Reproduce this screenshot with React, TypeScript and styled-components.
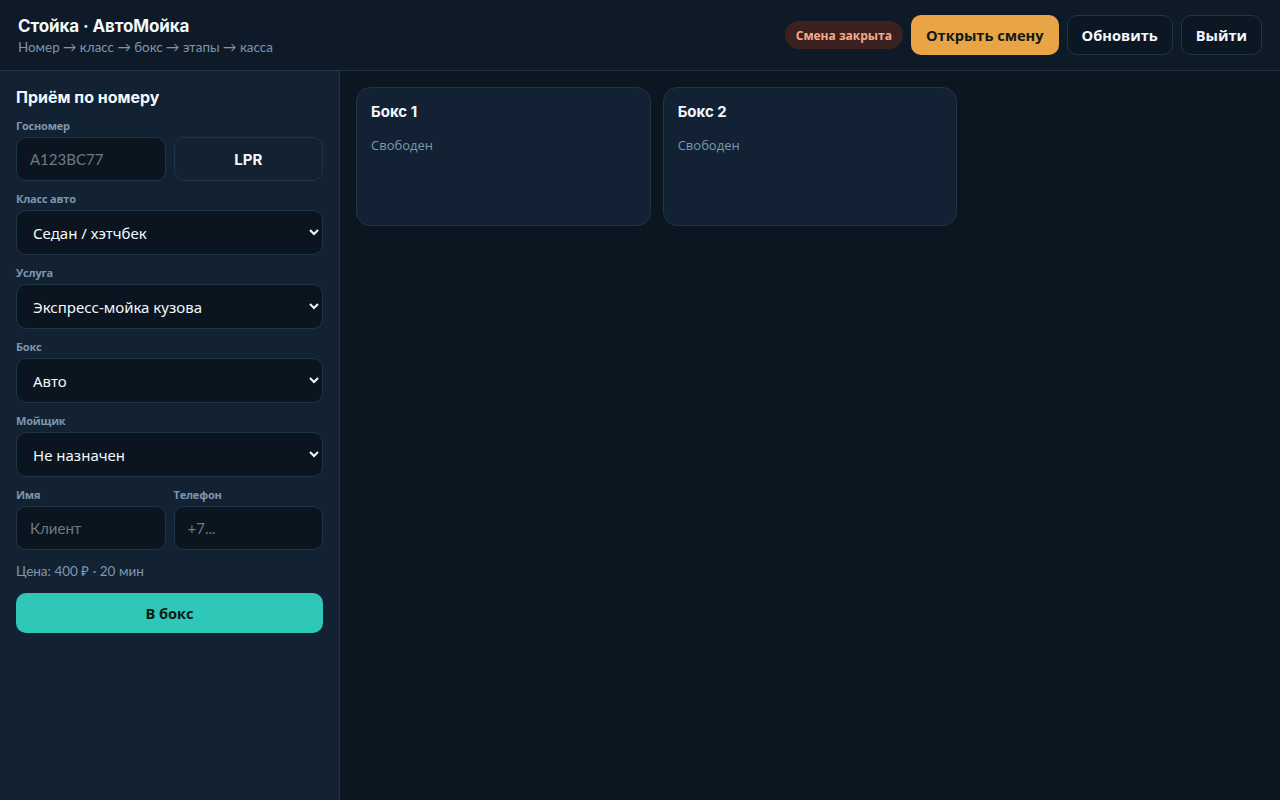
import React from 'react'
import styled, { createGlobalStyle } from 'styled-components'

const GlobalStyle = createGlobalStyle`
  html, body {
    margin: 0;
    padding: 0;
    background: #0b1620;
    color: #e8f0f7;
    color-scheme: dark;
    font-family: Inter, "Noto Sans", "DejaVu Sans", sans-serif;
  }
  * { box-sizing: border-box; }
`

const Page = styled.div`
  width: 100%;
  height: 100vh;
  display: flex;
  flex-direction: column;
  overflow: hidden;
`

const Header = styled.header`
  height: 71px;
  flex-shrink: 0;
  display: flex;
  align-items: center;
  justify-content: space-between;
  padding: 0 18px;
  background: #0e1a28;
  border-bottom: 1px solid #1c3345;
`

const Brand = styled.div`
  display: flex;
  flex-direction: column;
  gap: 3px;
  h1 {
    margin: 0;
    font-size: 17px;
    font-weight: 700;
    color: #f3f8fc;
    letter-spacing: -0.1px;
  }
  span {
    font-family: Lato, "Open Sans", sans-serif;
    font-size: 13.4px;
    color: #7d97ad;
  }
`

const Actions = styled.div`
  display: flex;
  align-items: center;
  gap: 8px;
`

const Pill = styled.span`
  display: inline-flex;
  align-items: center;
  height: 28px;
  padding: 0 11px;
  border-radius: 14px;
  background: #3b2220;
  color: #f6a98c;
  font-family: "Open Sans", sans-serif;
  font-size: 12px;
  font-weight: 700;
`

const Button = styled.button<{ $variant?: 'warn' | 'ghost' | 'accent' }>`
  height: 40px;
  padding: 0 14px;
  border-radius: 10px;
  font-family: "Open Sans", sans-serif;
  font-size: 14.6px;
  font-weight: 700;
  cursor: pointer;
  border: 1px solid ${p => (p.$variant === 'ghost' ? '#1f3649' : 'transparent')};
  background: ${p =>
    p.$variant === 'warn' ? '#e9a446' : p.$variant === 'accent' ? '#2ec7b8' : '#0c1724'};
  color: ${p => (p.$variant === 'ghost' ? '#f3f8fc' : '#0d1a16')};
`

const Body = styled.div`
  flex: 1;
  display: flex;
  min-height: 0;
`

const Sidebar = styled.aside`
  width: 340px;
  flex-shrink: 0;
  background: #132233;
  border-right: 1px solid #1c3345;
  padding: 16px;
  display: flex;
  flex-direction: column;
`

const Title = styled.h2`
  margin: 0 0 11px;
  font-size: 16px;
  font-weight: 700;
  color: #f3f8fc;
`

const Field = styled.div`
  display: flex;
  flex-direction: column;
  gap: 4px;
  margin-bottom: 10px;
  min-width: 0;
`

const Label = styled.label`
  font-family: "Open Sans", sans-serif;
  font-size: 11px;
  font-weight: 700;
  color: #7d97ad;
  letter-spacing: -0.2px;
`

const Row = styled.div`
  display: grid;
  grid-template-columns: 1fr 1fr;
  gap: 8px;
`

const Input = styled.input`
  width: 100%;
  min-width: 0;
  height: 44px;
  padding: 0 13px;
  border-radius: 10px;
  border: 1px solid #1e3447;
  background: #0a1520;
  color: #e8f0f7;
  font-family: Lato, sans-serif;
  font-size: 15px;
  outline: none;
  &::placeholder { color: #6e7a84; }
`

const LprButton = styled.button`
  height: 44px;
  border-radius: 10px;
  border: 1px solid #1e3447;
  background: #132233;
  color: #f3f8fc;
  font-family: Inter, sans-serif;
  font-size: 15px;
  font-weight: 700;
  cursor: pointer;
`

const Select = styled.select`
  width: 100%;
  height: 45px;
  padding: 0 12px;
  border-radius: 10px;
  border: 1px solid #1e3447;
  background: #0a1520;
  color: #f3f8fc;
  font-family: "Noto Sans", sans-serif;
  font-size: 15px;
  outline: none;
`

const Price = styled.div`
  font-family: Lato, sans-serif;
  font-size: 13.5px;
  color: #7d97ad;
  margin: 2px 0 13px;
`

const Main = styled.main`
  flex: 1;
  padding: 16px;
  display: grid;
  grid-template-columns: repeat(3, 1fr);
  gap: 12px;
  align-content: start;
`

const BoxCard = styled.div`
  min-height: 139px;
  border-radius: 14px;
  background: #122234;
  border: 1px solid #1e3447;
  padding: 14px;
  h3 {
    margin: 0 0 15px;
    font-size: 15px;
    font-weight: 700;
    color: #f3f8fc;
  }
  p {
    margin: 0;
    font-family: "Open Sans", sans-serif;
    font-size: 13px;
    color: #7d97ad;
  }
`

const boxes = ['Бокс 1', 'Бокс 2']

export default function App() {
  return (
    <Page>
      <GlobalStyle />
      <Header>
        <Brand>
          <h1>Стойка · АвтоМойка</h1>
          <span>Номер → класс → бокс → этапы → касса</span>
        </Brand>
        <Actions>
          <Pill>Смена закрыта</Pill>
          <Button $variant="warn">Открыть смену</Button>
          <Button $variant="ghost">Обновить</Button>
          <Button $variant="ghost">Выйти</Button>
        </Actions>
      </Header>
      <Body>
        <Sidebar>
          <Title>Приём по номеру</Title>
          <Field>
            <Label>Госномер</Label>
            <Row>
              <Input placeholder="А123ВС77" />
              <LprButton>LPR</LprButton>
            </Row>
          </Field>
          <Field>
            <Label>Класс авто</Label>
            <Select defaultValue="sedan">
              <option value="sedan">Седан / хэтчбек</option>
              <option value="suv">Кроссовер</option>
            </Select>
          </Field>
          <Field>
            <Label>Услуга</Label>
            <Select defaultValue="express">
              <option value="express">Экспресс-мойка кузова</option>
            </Select>
          </Field>
          <Field>
            <Label>Бокс</Label>
            <Select defaultValue="auto">
              <option value="auto">Авто</option>
            </Select>
          </Field>
          <Field>
            <Label>Мойщик</Label>
            <Select defaultValue="none">
              <option value="none">Не назначен</option>
            </Select>
          </Field>
          <Row>
            <Field>
              <Label>Имя</Label>
              <Input placeholder="Клиент" />
            </Field>
            <Field>
              <Label>Телефон</Label>
              <Input placeholder="+7..." />
            </Field>
          </Row>
          <Price>Цена: 400 ₽ · 20 мин</Price>
          <Button $variant="accent">В бокс</Button>
        </Sidebar>
        <Main>
          {boxes.map(b => (
            <BoxCard key={b}>
              <h3>{b}</h3>
              <p>Свободен</p>
            </BoxCard>
          ))}
        </Main>
      </Body>
    </Page>
  )
}
